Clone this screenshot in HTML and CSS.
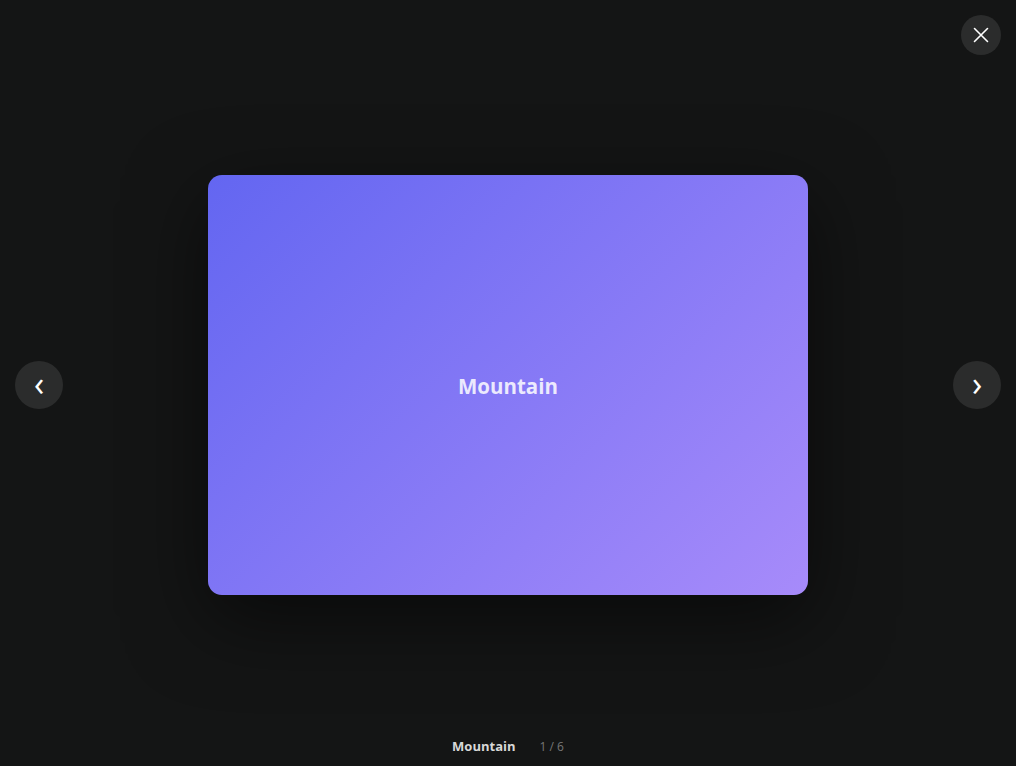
FILE: index.html
```html
<!DOCTYPE html>
<html lang="en">
<head>
<meta charset="utf-8">
<title>Lightbox</title>
<link rel="stylesheet" href="styles.css">
</head>
<body>
<div class="viewer">
  <button class="close" aria-label="Close">
    <svg width="18" height="18" viewBox="0 0 18 18"><path d="M2.5 2.5 L15.5 15.5 M15.5 2.5 L2.5 15.5" stroke="#fff" stroke-width="1.6" stroke-linecap="round"/></svg>
  </button>
  <button class="nav prev" aria-label="Previous">‹</button>
  <div class="card"><span class="card-title">Mountain</span></div>
  <button class="nav next" aria-label="Next">›</button>
  <div class="caption">
    <span class="caption-title">Mountain</span>
    <span class="caption-count">1 / 6</span>
  </div>
</div>
</body>
</html>
```
FILE: styles.css
```css
* { box-sizing: border-box; }
html, body { margin: 0; padding: 0; }
body {
  background: #141515;
  font-family: "Open Sans", Lato, sans-serif;
  width: 1016px;
  height: 766px;
  overflow: hidden;
}
.viewer {
  position: relative;
  height: 766px;
  display: flex;
  flex-direction: column;
  align-items: center;
  padding-top: 175px;
}
.card {
  width: 600px;
  height: 420px;
  border-radius: 14px;
  background: linear-gradient(135deg, #6366f1 0%, #a78bfa 100%);
  box-shadow: 0 24px 80px rgba(0,0,0,0.55);
  display: flex;
  align-items: center;
  justify-content: center;
}
.card-title {
  color: rgba(255,255,255,0.85);
  font-size: 20.5px;
  font-weight: 700;
  margin-top: 2px;
}
.close {
  position: absolute;
  top: 15px;
  right: 15px;
  width: 40px;
  height: 40px;
  border-radius: 50%;
  border: none;
  background: #2b2c2c;
  display: flex;
  align-items: center;
  justify-content: center;
  padding: 0;
}
.nav {
  position: absolute;
  top: 361px;
  width: 48px;
  height: 48px;
  border-radius: 50%;
  border: none;
  background: #2b2c2c;
  color: #fff;
  font-family: "Open Sans", sans-serif;
  font-weight: 400;
  font-size: 34px;
  line-height: 44px;
  padding: 0 0 5px 0;
}
.prev { left: 15px; }
.next { right: 15px; }
.caption {
  margin-top: auto;
  padding-bottom: 11px;
  display: flex;
  align-items: baseline;
  gap: 24px;
}
.caption-title {
  color: #d8d8d8;
  font-size: 13px;
  font-weight: 700;
}
.caption-count {
  color: #777;
  font-size: 12px;
}
```
